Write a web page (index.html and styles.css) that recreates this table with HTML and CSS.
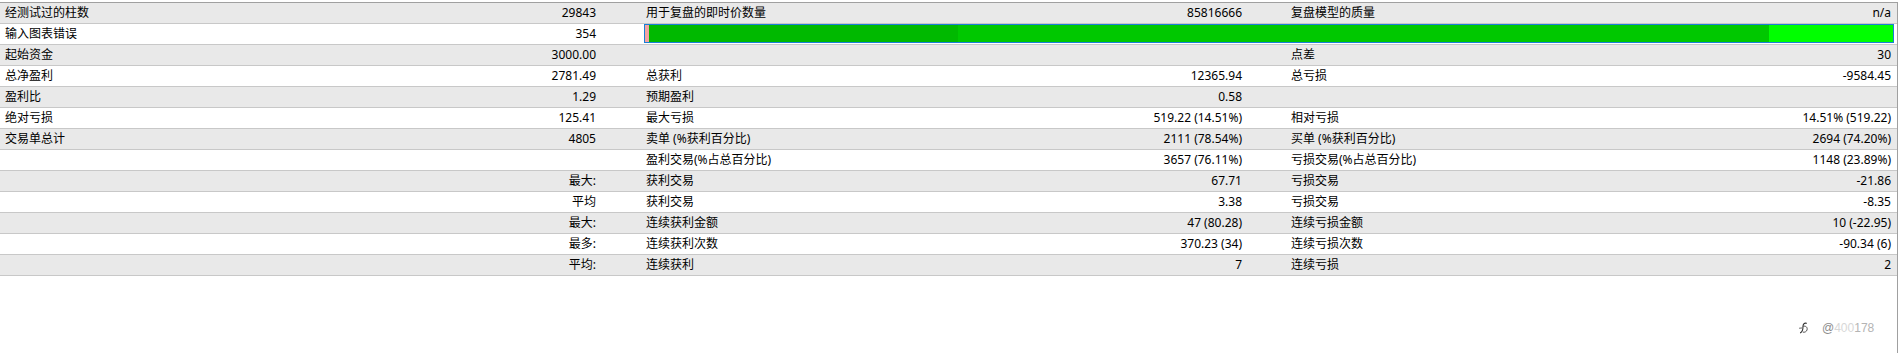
FILE: index.html
```html
<!DOCTYPE html>
<html lang="zh-CN">
<head>
<meta charset="utf-8">
<title>测试报告</title>
<link rel="stylesheet" href="styles.css">
</head>
<body>
<div class="panel">
  <div class="table">
    <div class="row gray">
      <div class="lab">经测试过的柱数</div><div class="val">29843</div><div></div>
      <div class="lab">用于复盘的即时价数量</div><div class="val">85816666</div><div></div>
      <div class="lab">复盘模型的质量</div><div class="val">n/a</div>
    </div>
    <div class="row white">
      <div class="lab">输入图表错误</div><div class="val">354</div><div></div>
      <div class="bar">
        <div class="seg pink" style="width:4px"></div>
        <div class="seg dark" style="width:309px"></div>
        <div class="seg mid" style="width:811px"></div>
        <div class="seg light" style="width:124px"></div>
      </div>
    </div>
    <div class="row gray">
      <div class="lab">起始资金</div><div class="val">3000.00</div><div></div>
      <div class="lab"></div><div class="val"></div><div></div>
      <div class="lab">点差</div><div class="val">30</div>
    </div>
    <div class="row white">
      <div class="lab">总净盈利</div><div class="val">2781.49</div><div></div>
      <div class="lab">总获利</div><div class="val">12365.94</div><div></div>
      <div class="lab">总亏损</div><div class="val">-9584.45</div>
    </div>
    <div class="row gray">
      <div class="lab">盈利比</div><div class="val">1.29</div><div></div>
      <div class="lab">预期盈利</div><div class="val">0.58</div><div></div>
      <div class="lab"></div><div class="val"></div>
    </div>
    <div class="row white">
      <div class="lab">绝对亏损</div><div class="val">125.41</div><div></div>
      <div class="lab">最大亏损</div><div class="val">519.22 (14.51%)</div><div></div>
      <div class="lab">相对亏损</div><div class="val">14.51% (519.22)</div>
    </div>
    <div class="row gray">
      <div class="lab">交易单总计</div><div class="val">4805</div><div></div>
      <div class="lab">卖单 (%获利百分比)</div><div class="val">2111 (78.54%)</div><div></div>
      <div class="lab">买单 (%获利百分比)</div><div class="val">2694 (74.20%)</div>
    </div>
    <div class="row white">
      <div class="lab"></div><div class="val"></div><div></div>
      <div class="lab">盈利交易(%占总百分比)</div><div class="val">3657 (76.11%)</div><div></div>
      <div class="lab">亏损交易(%占总百分比)</div><div class="val">1148 (23.89%)</div>
    </div>
    <div class="row gray">
      <div class="lab"></div><div class="val">最大:</div><div></div>
      <div class="lab">获利交易</div><div class="val">67.71</div><div></div>
      <div class="lab">亏损交易</div><div class="val">-21.86</div>
    </div>
    <div class="row white">
      <div class="lab"></div><div class="val">平均</div><div></div>
      <div class="lab">获利交易</div><div class="val">3.38</div><div></div>
      <div class="lab">亏损交易</div><div class="val">-8.35</div>
    </div>
    <div class="row gray">
      <div class="lab"></div><div class="val">最大:</div><div></div>
      <div class="lab">连续获利金额</div><div class="val">47 (80.28)</div><div></div>
      <div class="lab">连续亏损金额</div><div class="val">10 (-22.95)</div>
    </div>
    <div class="row white">
      <div class="lab"></div><div class="val">最多:</div><div></div>
      <div class="lab">连续获利次数</div><div class="val">370.23 (34)</div><div></div>
      <div class="lab">连续亏损次数</div><div class="val">-90.34 (6)</div>
    </div>
    <div class="row gray">
      <div class="lab"></div><div class="val">平均:</div><div></div>
      <div class="lab">连续获利</div><div class="val">7</div><div></div>
      <div class="lab">连续亏损</div><div class="val">2</div>
    </div>
  </div>
  <div class="watermark">
    <svg class="wm-icon" width="11" height="12" viewBox="0 0 11 12">
      <path d="M8.5 1.2 C6 0.6 5 2.5 5 4.5 C5 7 4.5 9.5 2.5 10.8" fill="none" stroke="#333" stroke-width="1.1" stroke-linecap="round"/>
      <path d="M5.2 4.2 C8 3.5 9.8 5.5 9 8 C8.4 9.8 6.5 10.6 5.2 10.2" fill="none" stroke="#555" stroke-width="1" stroke-linecap="round"/>
      <path d="M1.5 6.2 L3.8 6" stroke="#555" stroke-width="0.9" stroke-linecap="round"/>
    </svg>
    <span class="wm-text"><span class="wm-at">@</span><span class="wm-mid">400</span><span class="wm-end">178</span></span>
  </div>
</div>
</body>
</html>
```

FILE: styles.css
```css
html, body {
  margin: 0;
  padding: 0;
  background: #ffffff;
}

body {
  width: 1900px;
  height: 353px;
  overflow: hidden;
  font-family: "Noto Sans", "Noto Sans CJK SC", sans-serif;
  font-size: 12px;
  color: #000000;
}

.panel {
  position: relative;
  box-sizing: border-box;
  width: 1898px;
  height: 351px;
  margin-top: 2px;
  border-top: 1px solid #a0a0a0;
  border-right: 1px solid #a0a0a0;
  background: #ffffff;
}

.table {
  display: flex;
  flex-direction: column;
}

.row {
  display: grid;
  grid-template-columns: 300px 300px 41px 303px 302px 40px 304px 307px;
  height: 20px;
  border-bottom: 1px solid #c8c8c8;
  line-height: 20px;
  white-space: nowrap;
}

.gray {
  background: #e9e9e9;
}

.white {
  background: #ffffff;
}

.lab {
  padding-left: 5px;
  overflow: hidden;
}

.val {
  text-align: right;
  padding-right: 4px;
  overflow: hidden;
}

.row > .val:last-child {
  padding-right: 6px;
}

.bar {
  grid-column: 4 / 9;
  display: flex;
  height: 17px;
  margin: 0 3px 1px 3px;
  border: 1px solid #1a7fd6;
  background: #00c800;
}

.seg {
  height: 100%;
}

.pink {
  background: #f3a3a3;
}

.dark {
  background: #00b900;
}

.mid {
  background: #00c800;
}

.light {
  background: #00ff00;
}

.watermark {
  position: absolute;
  left: 1798px;
  top: 318px;
  display: flex;
  align-items: center;
  gap: 13px;
  font-family: "Liberation Sans", "Noto Sans", sans-serif;
  font-size: 12px;
}

.wm-at {
  color: #8c8c8c;
}

.wm-mid {
  color: #d8d8d8;
}

.wm-end {
  color: #b4b4b4;
}
```
